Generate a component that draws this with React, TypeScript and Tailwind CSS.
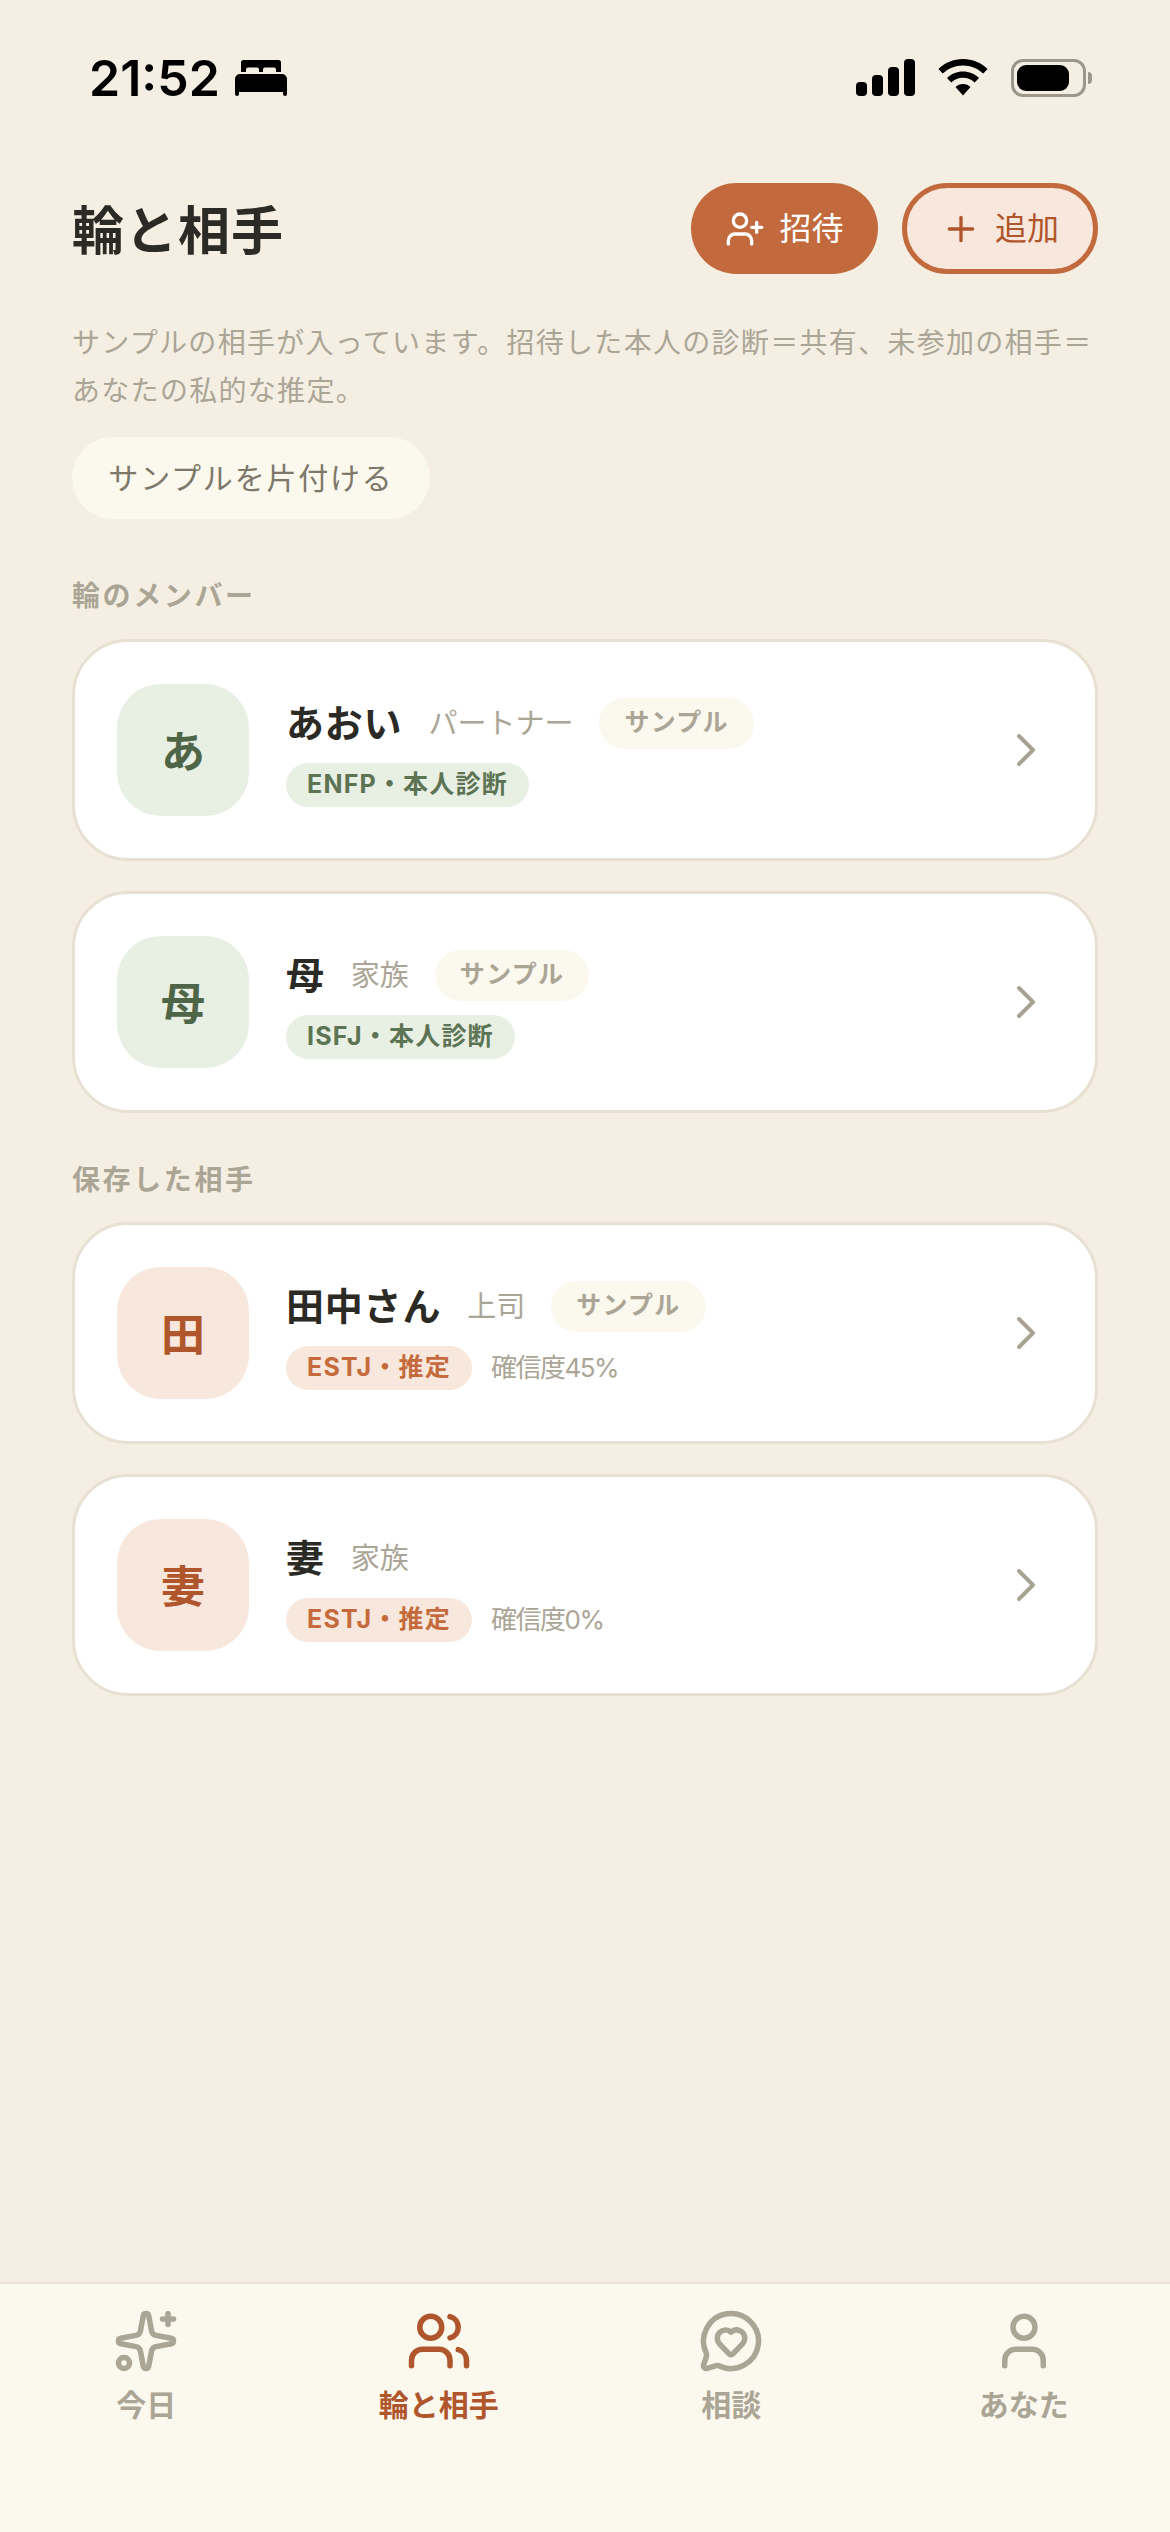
import React from 'react';
import { ChevronRight, MessageCircleHeart, Plus, Sparkles, User, UserPlus, Users } from 'lucide-react';

type Person = {
  initial: string;
  name: string;
  role: string;
  type: string;
  sample?: boolean;
  confidence?: string;
};

const MEMBERS: Person[] = [
  { initial: 'あ', name: 'あおい', role: 'パートナー', type: 'ENFP・本人診断', sample: true },
  { initial: '母', name: '母', role: '家族', type: 'ISFJ・本人診断', sample: true },
];

const SAVED: Person[] = [
  { initial: '田', name: '田中さん', role: '上司', type: 'ESTJ・推定', sample: true, confidence: '確信度45%' },
  { initial: '妻', name: '妻', role: '家族', type: 'ESTJ・推定', confidence: '確信度0%' },
];

const StatusBar = () => (
  <div className="flex items-center justify-between h-[155px] pl-[89px] pr-[78px] shrink-0">
    <div className="flex items-center gap-[15px]">
      <span className="text-[50px] leading-none font-semibold text-black font-['Inter',sans-serif]">21:52</span>
      <svg width="52" height="36" viewBox="0 0 52 36" fill="#000">
        <path d="M6 2.5A2.5 2.5 0 0 1 8.500 0h35A2.500 2.500 0 0 1 46 2.500V12h-5V9.500a2 2 0 0 0-2-2H30a2 2 0 0 0-2 2V12h-4V9.500a2 2 0 0 0-2-2h-9a2 2 0 0 0-2 2V12H6z" />
        <path d="M5 14h42a5 5 0 0 1 5 5v15a2 2 0 0 1-4 0v-2H4v2a2 2 0 0 1-4 0V19a5 5 0 0 1 5-5z" />
      </svg>
    </div>
    <div className="flex items-center gap-[23px]">
      <div className="flex items-end gap-[5px] h-[37px]">
        <div className="w-[11px] h-[14px] rounded-[4px] bg-black" />
        <div className="w-[11px] h-[21px] rounded-[4px] bg-black" />
        <div className="w-[11px] h-[29px] rounded-[4px] bg-black" />
        <div className="w-[11px] h-[37px] rounded-[4px] bg-black" />
      </div>
      <svg width="50" height="37" viewBox="0 0 50 37" fill="#000">
        <path d="M25 0c9.600 0 18.200 3.800 24.600 10l-4.300 4.600C40 9.500 32.900 6.400 25 6.400S10 9.500 4.700 14.600L.4 10C6.800 3.800 15.400 0 25 0z" />
        <path d="M25 12.500c6.200 0 11.800 2.400 16 6.400l-4.300 4.600c-3-2.900-7.200-4.700-11.700-4.700s-8.700 1.800-11.700 4.700L9 18.900c4.200-4 9.800-6.400 16-6.400z" />
        <path d="M25 25c3 0 5.600 1.100 7.500 3L25 36.500 17.500 28c1.900-1.900 4.500-3 7.500-3z" />
      </svg>
      <div className="flex items-center gap-[2px]">
        <div className="w-[75px] h-[38px] rounded-[12px] border-[3px] border-[#9c978a] p-[3px] pr-[14px]">
          <div className="w-full h-full rounded-[9px] bg-black" />
        </div>
        <div className="w-[4px] h-[12px] rounded-r-full bg-[#9c978a]" />
      </div>
    </div>
  </div>
);

const SectionLabel = ({ children }: { children: React.ReactNode }) => (
  <h2 className="text-[28px] leading-[40px] font-bold tracking-[2.6px] text-[#aba596]">{children}</h2>
);

const PersonCard = ({ person, tone }: { person: Person; tone: 'green' | 'orange' }) => {
  const green = tone === 'green';
  return (
    <div className="flex items-center h-[222px] pl-[42px] pr-[41px] rounded-[56px] bg-white border-[3px] border-[#e8e1d3]">
      <div
        className={`flex items-center justify-center w-[132px] h-[132px] pt-[4px] rounded-[44px] shrink-0 text-[44px] font-bold ${
          green ? 'bg-[#e8efe3] text-[#4f6548]' : 'bg-[#f8e7dc] text-[#b0562c]'
        }`}
      >
        {person.initial}
      </div>
      <div className="flex-1 min-w-0 ml-[37px] pt-[4px] flex flex-col items-start gap-[14px]">
        <div className="flex items-center h-[51px]">
          <span className="text-[38px] leading-none font-bold tracking-[0.8px] text-[#2c2a25]">{person.name}</span>
          <span className="ml-[26px] text-[29px] leading-none text-[#aba596]">{person.role}</span>
          {person.sample && (
            <span className="ml-[26px] flex items-center h-[51px] px-[25px] rounded-full bg-[#fbf8ee] text-[25px] font-bold tracking-[1.3px] text-[#aba596]">
              サンプル
            </span>
          )}
        </div>
        <div className="flex items-center">
          <span
            className={`flex items-center h-[44px] px-[21px] rounded-full text-[25px] font-bold tracking-[1.2px] ${
              green ? 'bg-[#e8efe3] text-[#5c7354]' : 'bg-[#f8e7dc] text-[#c46a3d]'
            }`}
          >
            {person.type}
          </span>
          {person.confidence && (
            <span className="ml-[19px] text-[26px] text-[#aba596] tracking-[-1.5px]">{person.confidence}</span>
          )}
        </div>
      </div>
      <ChevronRight className="w-[56px] h-[56px] text-[#a8a292] shrink-0" strokeWidth={1.7} />
    </div>
  );
};

const NAV = [
  { label: '今日', Icon: Sparkles },
  { label: '輪と相手', Icon: Users, active: true },
  { label: '相談', Icon: MessageCircleHeart },
  { label: 'あなた', Icon: User },
];

export default function App() {
  return (
    <div className="flex flex-col w-[1170px] h-[2532px] bg-[#f5efe3] font-['Inter','Noto_Sans_CJK_JP',sans-serif]">
      <StatusBar />
      <main className="flex-1 px-[72px]">
        <div className="flex items-center justify-between mt-[28px]">
          <h1 className="mt-[6px] text-[52px] leading-none font-bold text-[#2c2a25] tracking-[1px]">輪と相手</h1>
          <div className="flex gap-[24px]">
            <button className="flex items-center justify-center gap-[14px] w-[187px] h-[91px] rounded-full bg-[#c26a3d] text-white text-[32px]">
              <UserPlus className="w-[40px] h-[40px]" strokeWidth={2} />
              招待
            </button>
            <button className="flex items-center justify-center gap-[14px] w-[196px] h-[91px] rounded-full bg-[#f8e7dc] border-[5px] border-[#c26a3d] text-[#b0562c] text-[32px]">
              <Plus className="w-[40px] h-[40px]" strokeWidth={2} />
              追加
            </button>
          </div>
        </div>
        <p className="mt-[45px] text-[28px] leading-[48px] tracking-[1.3px] text-[#aba596]">
          サンプルの相手が入っています。招待した本人の診断＝共有、未参加の相手＝あなたの私的な推定。
        </p>
        <button className="mt-[22px] h-[82px] w-[358px] rounded-full bg-[#fbf8ee] text-[30px] tracking-[1.8px] text-[#7d7869]">
          サンプルを片付ける
        </button>
        <div className="mt-[57px]">
          <SectionLabel>輪のメンバー</SectionLabel>
          <div className="mt-[23px] flex flex-col gap-[30px]">
            {MEMBERS.map((p) => (
              <PersonCard key={p.name} person={p} tone="green" />
            ))}
          </div>
        </div>
        <div className="mt-[47px]">
          <SectionLabel>保存した相手</SectionLabel>
          <div className="mt-[22px] flex flex-col gap-[30px]">
            {SAVED.map((p) => (
              <PersonCard key={p.name} person={p} tone="orange" />
            ))}
          </div>
        </div>
      </main>
      <nav className="grid grid-cols-4 h-[250px] pt-[24px] bg-[#fbf8ee] border-t-2 border-[#ece6d9] shrink-0">
        {NAV.map(({ label, Icon, active }) => (
          <div
            key={label}
            className={`flex flex-col items-center gap-[11px] ${active ? 'text-[#b0562c]' : 'text-[#aba596]'}`}
          >
            <Icon className="w-[66px] h-[66px]" strokeWidth={2} />
            <span className="text-[30px] leading-[40px] font-bold">{label}</span>
          </div>
        ))}
      </nav>
    </div>
  );
}
